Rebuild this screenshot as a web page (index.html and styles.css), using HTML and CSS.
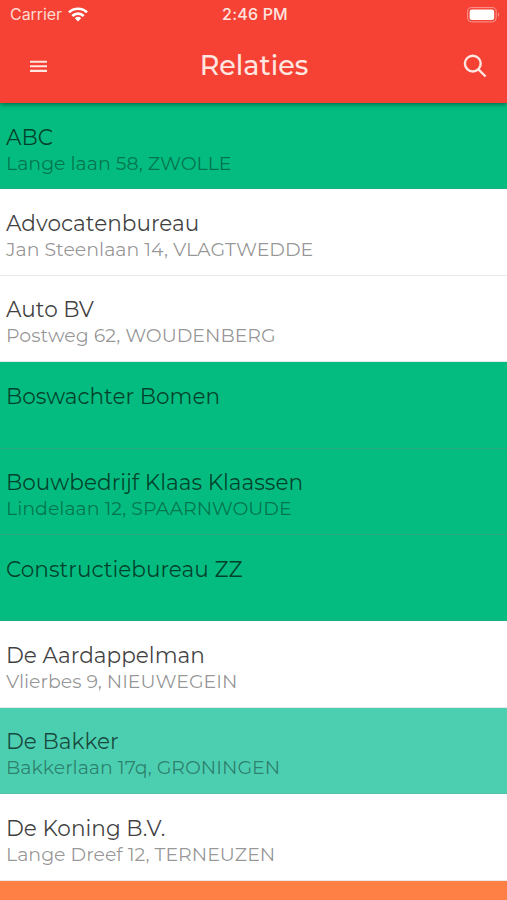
FILE: index.html
```html
<!DOCTYPE html>
<html lang="nl">
<head>
<meta charset="utf-8">
<title>Relaties</title>
<link rel="stylesheet" href="styles.css">
</head>
<body>
<header class="header">
  <div class="status">
    <div class="carrier"><span>Carrier</span>
      <svg class="wifi" width="20" height="15" viewBox="0 0 20 15"><g fill="none" stroke="currentColor" stroke-width="2.7"><path d="M1 5.4C6 .5 14 .5 19 5.4"/><path d="M4.3 9C7.5 5.8 12.5 5.8 15.7 9"/></g><path fill="currentColor" d="M6.8 11.2q3.2-2.7 6.4 0L10 14.6z"/></svg>
    </div>
    <div class="time">2:46 PM</div>
    <svg class="battery" width="33" height="16" viewBox="0 0 33 16"><rect x=".6" y=".6" width="28.6" height="14.3" rx="4" fill="none" stroke="currentColor" stroke-opacity=".45"/><rect x="2.6" y="2.6" width="24.6" height="10.3" rx="2.2" fill="currentColor"/><path d="M31 5.5q2 2.2 0 4.5z" fill="currentColor" fill-opacity=".55"/></svg>
  </div>
  <div class="toolbar">
    <svg class="menu" width="17" height="13" viewBox="0 0 17 13"><path d="M0 1.7h17M0 6.3h17M0 10.9h17" stroke="currentColor" stroke-width="2.1"/></svg>
    <h1 class="title">Relaties</h1>
    <svg class="search" width="24" height="24" viewBox="0 0 24 24"><g fill="none" stroke="currentColor" stroke-width="2.4"><circle cx="9.8" cy="9.6" r="7.9"/><path d="M15.4 15.3l7.2 7.2"/></g></svg>
  </div>
</header>
<main class="list">
  <div class="row green"><div class="name">ABC</div><div class="addr">Lange laan 58, ZWOLLE</div></div>
  <div class="row"><div class="name">Advocatenbureau</div><div class="addr">Jan Steenlaan 14, VLAGTWEDDE</div></div>
  <div class="row"><div class="name">Auto BV</div><div class="addr">Postweg 62, WOUDENBERG</div></div>
  <div class="row green"><div class="name">Boswachter Bomen</div></div>
  <div class="row green"><div class="name">Bouwbedrijf Klaas Klaassen</div><div class="addr">Lindelaan 12, SPAARNWOUDE</div></div>
  <div class="row green"><div class="name">Constructiebureau ZZ</div></div>
  <div class="row"><div class="name">De Aardappelman</div><div class="addr">Vlierbes 9, NIEUWEGEIN</div></div>
  <div class="row teal"><div class="name">De Bakker</div><div class="addr">Bakkerlaan 17q, GRONINGEN</div></div>
  <div class="row"><div class="name">De Koning B.V.</div><div class="addr">Lange Dreef 12, TERNEUZEN</div></div>
  <div class="row orange"></div>
</main>
</body>
</html>
```
FILE: styles.css
```css
* { box-sizing: border-box; }
body { margin: 0; height: 900px; overflow: hidden; display: flex; flex-direction: column; background: #fff; font-family: Montserrat, Inter, sans-serif; }
.header { position: relative; z-index: 1; height: 103px; flex: none; background: #f54235; color: #ffe6e0; box-shadow: 0 1px 5px rgba(0,0,0,.5); }
.status { height: 29px; padding: 0 7px 0 10px; display: grid; grid-template-columns: 1fr auto 1fr; align-items: center; font: 400 16px/29px Inter, sans-serif; }
.carrier { display: flex; align-items: center; gap: 6px; letter-spacing: -.05px; color: #ffd9d1; }
.wifi { color: #fff; }
.time { font-weight: 500; letter-spacing: .2px; }
.battery { justify-self: end; color: #fff; }
.toolbar { height: 74px; padding: 0 20px 0 21px; display: grid; grid-template-columns: 1fr auto 1fr; align-items: center; }
.menu { margin-left: 9px; }
.title { margin: 0; font-size: 27px; line-height: 36px; font-weight: 500; }
.search { justify-self: end; }
.list { flex: 1; min-height: 0; overflow: hidden; }
.row { height: 86.4px; padding: 19.6px 6px 0; border-bottom: 1px solid rgba(128,128,128,.18); }
.name { font-size: 21.6px; line-height: 28px; font-weight: 400; color: rgba(0,0,0,.75); white-space: nowrap; }
.addr { margin-top: 1px; font-size: 18.95px; line-height: 24px; font-weight: 400; color: rgba(0,0,0,.43); white-space: nowrap; }
.green { background: #04bc7f; }
.teal { background: #4bcfb0; }
.green .name, .teal .name { color: rgba(0,0,0,.66); }
.green .addr, .teal .addr { color: rgba(0,0,0,.4); }
.green:has(+ .green) { border-bottom-color: rgba(128,128,128,.3); }
.orange { background: #ff8044; }
```
